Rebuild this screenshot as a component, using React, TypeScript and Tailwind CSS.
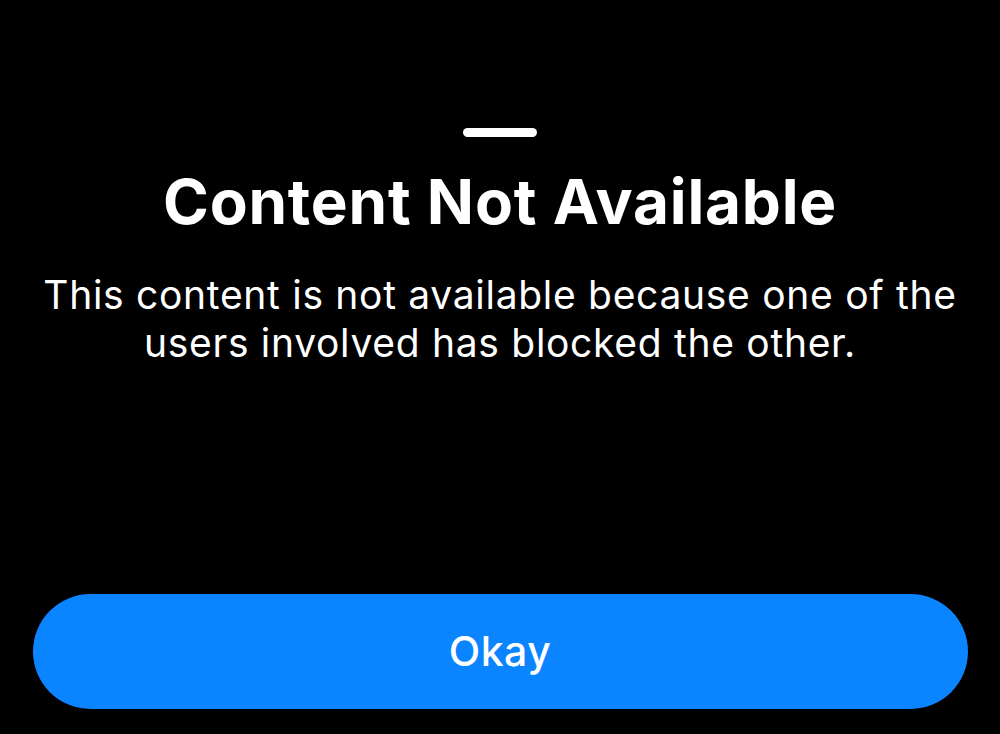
export default function App() {
  return (
    <div
      className="flex h-[734px] w-[1000px] flex-col items-center bg-black text-white"
      style={{ fontFamily: "Inter, 'Noto Sans', sans-serif" }}
    >
      {/* sheet grabber */}
      <div className="mt-[128px] h-[9px] w-[74px] rounded-full bg-white" />

      <h1 className="mt-[30px] text-[62px] font-bold leading-[70px] tracking-[0.8px]">
        Content Not Available
      </h1>

      <p className="mt-[34px] px-[30px] text-center text-[39px] leading-[48px] tracking-[0.7px]">
        This content is not available because one of the users involved has blocked the other.
      </p>

      <div className="flex-1" />

      <button className="mb-[25px] flex h-[115px] w-[935px] items-center justify-center rounded-full bg-[#0a84ff] text-[41px] font-medium tracking-[0.5px] text-white">
        Okay
      </button>
    </div>
  );
}
